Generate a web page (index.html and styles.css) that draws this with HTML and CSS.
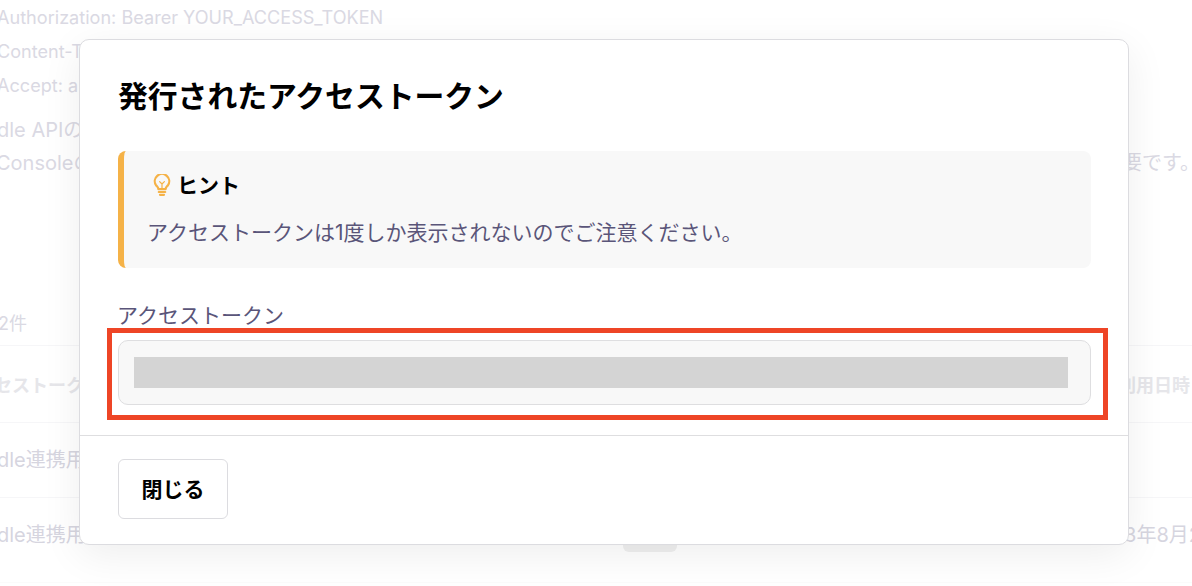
FILE: index.html
```html
<!DOCTYPE html>
<html lang="ja">
<head>
    <meta charset="UTF-8">
    <meta name="viewport" content="width=device-width, initial-scale=1.0">
    <title>発行されたアクセストークン</title>
    <link rel="stylesheet" href="styles.css">
</head>
<body>
    <div class="page">
        <div class="code-lines">
            <div class="code-line">Authorization: Bearer YOUR_ACCESS_TOKEN</div>
            <div class="code-line code-line-cut">Content-Type: application/json</div>
            <div class="code-line">Accept: application/json</div>
        </div>
        <div class="intro">
            <div class="intro-line intro-first">dle APIの</div>
            <div class="intro-line intro-second">
                <span>Consoleのアクセストークンの発行が</span>
                <span>要です。</span>
            </div>
        </div>
        <div class="count">2件</div>
        <div class="table">
            <div class="row row-head">
                <span>セストークン</span>
                <span>利用日時</span>
            </div>
            <div class="row">
                <span>dle連携用</span>
            </div>
            <div class="row row-last">
                <span>dle連携用トークン</span>
                <span>3年8月2</span>
                <div class="pager"></div>
            </div>
        </div>
    </div>

    <div class="modal">
        <div class="modal-body">
            <h2 class="modal-title">発行されたアクセストークン</h2>
            <div class="hint">
                <div class="hint-head">
                    <svg class="hint-icon" viewBox="0 0 18 22" fill="none" stroke="#f5b247" stroke-width="2.200" stroke-linecap="round" stroke-linejoin="round">
                        <path d="M5.400 15.200c0-1.800-1-2.400-2.400-4a7.200 7.200 0 1 1 12 0c-1.400 1.600-2.400 2.200-2.400 4z"/>
                        <path d="M6.600 7.600L9 10l2.400-2.400M9 10v4.800" stroke-width="1.200"/>
                        <path d="M5.800 18h6.400M7 20.800h4"/>
                    </svg>
                    <span>ヒント</span>
                </div>
                <p class="hint-text">アクセストークンは1度しか表示されないのでご注意ください。</p>
            </div>
            <div class="field-label">アクセストークン</div>
            <div class="field">
                <div class="token-box">
                    <div class="token-mask"></div>
                </div>
                <div class="highlight"></div>
            </div>
        </div>
        <div class="modal-footer">
            <button class="close-button">閉じる</button>
        </div>
    </div>
</body>
</html>
```

FILE: styles.css
```css
html, body {
    height: 100%;
}

body {
    margin: 0;
    overflow: hidden;
    background-color: #fff;
    font-family: Inter, "Noto Sans CJK JP", sans-serif;
}

.page {
    height: 582px;
    color: #dad9e3;
    font-size: 18px;
    border-bottom: 1px solid #fbfbfb;
}

.code-lines {
    margin-left: -3px;
    font-size: 18.100px;
}

.code-line {
    height: 34px;
    line-height: 34px;
}

.intro {
    margin-top: 12px;
    font-size: 20px;
}

.intro-line {
    height: 33px;
    line-height: 33px;
    white-space: nowrap;
}

.intro-first {
    margin-left: -3px;
}

.intro-second {
    display: flex;
    justify-content: space-between;
    margin-left: -4px;
    margin-right: -8px;
}

.count {
    margin-top: 133px;
    margin-left: -2px;
    height: 22px;
    line-height: 22px;
}

.table {
    margin-top: 10px;
}

.row {
    position: relative;
    display: flex;
    justify-content: space-between;
    align-items: center;
    height: 75px;
    padding-bottom: 4px;
    border-top: 1px solid #f6f6f8;
    box-sizing: border-box;
    font-size: 20px;
    color: #d6d5df;
    margin-left: -3px;
    white-space: nowrap;
}

.row-head {
    height: 77px;
    padding-bottom: 0;
    padding-right: 2px;
    margin-left: -6px;
    font-weight: 700;
    color: #e6e6ea;
    font-size: 18px;
}

.row-last span:last-of-type {
    margin-right: -9px;
}

.pager {
    position: absolute;
    left: 626px;
    top: 30px;
    width: 54px;
    height: 24px;
    background-color: #f0f0f0;
    border-radius: 6px;
}

.modal {
    position: absolute;
    left: 79px;
    top: 39px;
    width: 1050px;
    height: 506px;
    box-sizing: border-box;
    background-color: #fff;
    border: 1px solid #dcdce0;
    border-radius: 10px;
    box-shadow: 0 10px 40px rgba(0, 0, 0, 0.07);
}

.modal-body {
    height: 396px;
    box-sizing: border-box;
    padding: 35px 37px 0 38px;
    border-bottom: 1px solid #dedee0;
}

.modal-title {
    margin: 0;
    font-size: 29.800px;
    line-height: 42px;
    font-weight: 700;
    color: #000;
}

.hint {
    margin-top: 34px;
    height: 117px;
    box-sizing: border-box;
    padding: 19px 24px 0;
    background-color: #f8f8f8;
    border-left: 6px solid #f5b247;
    border-radius: 8px;
}

.hint-head {
    display: flex;
    align-items: center;
    gap: 6px;
    height: 28px;
    padding-left: 5px;
    font-size: 21px;
    font-weight: 700;
    color: #000;
}

.hint-icon {
    width: 18px;
    height: 22px;
    margin-top: 2px;
}

.hint-text {
    margin: 20px 0 0 -1px;
    font-size: 21px;
    line-height: 30px;
    color: #5a5579;
}

.field-label {
    margin-top: 33px;
    margin-left: -1px;
    height: 30px;
    line-height: 30px;
    font-size: 21px;
    color: #5a5579;
}

.field {
    position: relative;
    margin-top: 9px;
}

.token-box {
    height: 65px;
    box-sizing: border-box;
    padding: 16px 22px 16px 15px;
    background-color: #f8f8f8;
    border: 1px solid #dedee0;
    border-radius: 10px;
}

.token-mask {
    height: 31px;
    background-color: #d4d4d4;
}

.highlight {
    position: absolute;
    left: -11px;
    right: -17px;
    top: -12px;
    bottom: -15px;
    border: 5px solid #ee4526;
}

.modal-footer {
    padding: 23px 37px 0 38px;
}

.close-button {
    width: 110px;
    height: 60px;
    padding: 0 0 3px;
    background-color: #fff;
    border: 1px solid #dcdce0;
    border-radius: 6px;
    font-family: inherit;
    font-size: 21px;
    font-weight: 700;
    color: #000;
    cursor: pointer;
}
```
